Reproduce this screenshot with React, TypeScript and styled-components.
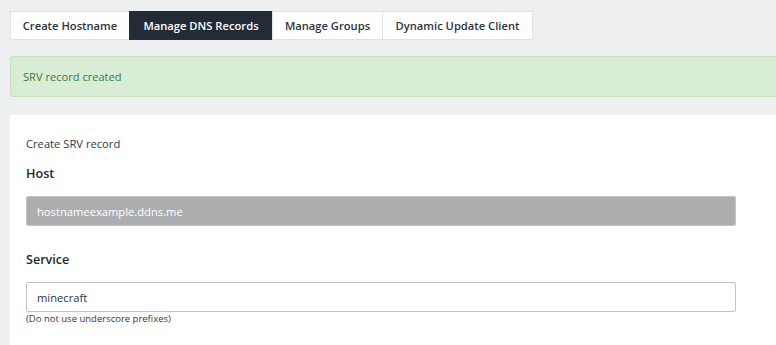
import styled, { createGlobalStyle } from 'styled-components';

const GlobalStyle = createGlobalStyle`
  body {
    margin: 0;
    background: #eeeff1;
    font-family: "Open Sans", "Liberation Sans", sans-serif;
    overflow: hidden;
  }
`;

const Page = styled.div`
  padding: 11px 0 0 10px;
`;

const Tabs = styled.ul`
  display: flex;
  margin: 0;
  padding: 0;
  list-style: none;
`;

const Tab = styled.li<{ $active?: boolean; $w: number }>`
  width: ${(p) => p.$w}px;
  height: 29px;
  box-sizing: border-box;
  display: flex;
  align-items: center;
  justify-content: center;
  font-size: 11.2px;
  font-weight: 600;
  color: ${(p) => (p.$active ? '#ffffff' : '#2b3340')};
  background: ${(p) => (p.$active ? '#222b36' : '#ffffff')};
  border: 1px solid ${(p) => (p.$active ? '#222b36' : '#dfe2e6')};
  & + & {
    margin-left: -1px;
  }
`;

const Alert = styled.div`
  margin-top: 16px;
  height: 41px;
  box-sizing: border-box;
  display: flex;
  align-items: center;
  padding-left: 12px;
  background: #d9ecd6;
  border: 1px solid #c4e2be;
  border-right: none;
  border-radius: 3px 0 0 3px;
  color: #3b7a3d;
  font-size: 11.1px;
`;

const Card = styled.div`
  margin-top: 18px;
  background: #ffffff;
  padding: 20px 0 30px 16px;
`;

const Intro = styled.p`
  margin: 0;
  font-size: 11.2px;
  line-height: 17px;
  color: #333840;
`;

const Field = styled.div<{ $top: number }>`
  margin-top: ${(p) => p.$top}px;
  width: 710px;
`;

const Label = styled.label`
  display: block;
  font-size: 12.6px;
  font-weight: 600;
  line-height: 20px;
  color: #222a33;
`;

const Input = styled.input<{ $disabled?: boolean }>`
  display: block;
  box-sizing: border-box;
  width: 100%;
  height: 30px;
  margin-top: 12px;
  padding: 0 10px;
  font-family: inherit;
  font-size: 11.2px;
  color: ${(p) => (p.$disabled ? '#ffffff' : '#2f343a')};
  background: ${(p) => (p.$disabled ? '#acadae' : '#ffffff')};
  border: 1px solid ${(p) => (p.$disabled ? '#c3c4c5' : '#c4c4c4')};
  border-radius: 2px;
  outline: none;
`;

const Help = styled.div`
  font-size: 9.5px;
  line-height: 14px;
  color: #333840;
`;

const tabs = [
  { label: 'Create Hostname', w: 120 },
  { label: 'Manage DNS Records', w: 144, active: true },
  { label: 'Manage Groups', w: 111 },
  { label: 'Dynamic Update Client', w: 151 },
];

export default function App() {
  return (
    <Page>
      <GlobalStyle />
      <Tabs>
        {tabs.map((t) => (
          <Tab key={t.label} $w={t.w} $active={t.active}>
            {t.label}
          </Tab>
        ))}
      </Tabs>
      <Alert>SRV record created</Alert>
      <Card>
        <Intro>Create SRV record</Intro>
        <Field $top={12}>
          <Label>Host</Label>
          <Input $disabled readOnly value="hostnameexample.ddns.me" />
        </Field>
        <Field $top={24}>
          <Label>Service</Label>
          <Input readOnly value="minecraft" />
          <Help>(Do not use underscore prefixes)</Help>
        </Field>
      </Card>
    </Page>
  );
}
